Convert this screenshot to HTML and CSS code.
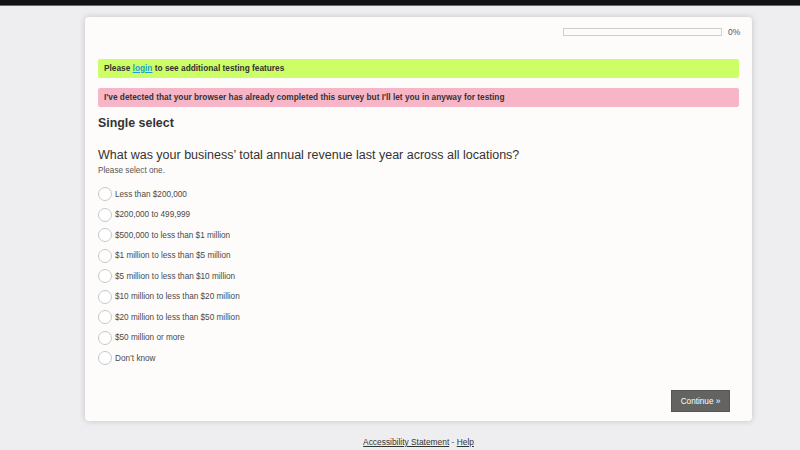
FILE: index.html
```html
<!DOCTYPE html>
<html>
<head>
<meta charset="utf-8">
<link rel="stylesheet" href="styles.css">
</head>
<body>
<div class="topbar"></div>
<div class="page">
  <div class="card">
    <div class="progress-row">
      <div class="progress"><div class="progress-fill"></div></div>
      <span class="pct">0%</span>
    </div>
    <div class="notice green">Please <a href="#">login</a> to see additional testing features</div>
    <div class="notice pink">I've detected that your browser has already completed this survey but I'll let you in anyway for testing</div>
    <h2 class="section">Single select</h2>
    <h1 class="question">What was your business’ total annual revenue last year across all locations?</h1>
    <p class="hint">Please select one.</p>
    <ul class="options">
      <li><span class="radio"></span>Less than $200,000</li>
      <li><span class="radio"></span>$200,000 to 499,999</li>
      <li><span class="radio"></span>$500,000 to less than $1 million</li>
      <li><span class="radio"></span>$1 million to less than $5 million</li>
      <li><span class="radio"></span>$5 million to less than $10 million</li>
      <li><span class="radio"></span>$10 million to less than $20 million</li>
      <li><span class="radio"></span>$20 million to less than $50 million</li>
      <li><span class="radio"></span>$50 million or more</li>
      <li><span class="radio"></span>Don’t know</li>
    </ul>
    <div class="actions"><button class="continue">Continue »</button></div>
  </div>
  <div class="footer"><a href="#">Accessibility Statement</a> - <a href="#">Help</a></div>
</div>
</body>
</html>
```
FILE: styles.css
```css
html, body { margin: 0; padding: 0; }
body {
  background: #eeedf0;
  font-family: "Liberation Sans", Arial, sans-serif;
  color: #333;
  width: 800px;
  height: 450px;
  overflow: hidden;
}
.topbar { height: 5px; background: #141216; border-bottom: 1px solid #6a6a6a; }
.page {
  padding: 11px 0 0 85px;
  width: 667px;
  display: flex;
  flex-direction: column;
  align-items: center;
}
.card {
  box-sizing: border-box;
  width: 667px;
  height: 404px;
  background: #fdfcfa;
  border-radius: 4px;
  box-shadow: 0 0 6px rgba(0,0,0,0.18);
  padding: 10px 13px 9px;
  display: flex;
  flex-direction: column;
}
.progress-row { display: flex; justify-content: flex-end; align-items: center; gap: 6px; height: 9px; margin-right: -1px; }
.progress { width: 157px; height: 6px; border: 1px solid #cfcfcf; background: #fbfbfb; }
.pct { font-size: 8.5px; color: #555; width: 12px; }
.notice {
  font-size: 8.3px;
  font-weight: bold;
  color: #333;
  padding: 0 6px;
  height: 19px;
  line-height: 19px;
  border-radius: 2px;
}
.notice a { color: #1a9fd9; }
.green { background: #ccfe66; margin-top: 23px; }
.pink { background: #f7b6c7; margin-top: 10px; }
.section { font-size: 12.4px; font-weight: bold; margin: 9px 0 0; color: #333; line-height: 15px; }
.question { font-size: 12.5px; font-weight: normal; margin: 16px 0 0; color: #333; line-height: 16px; }
.hint { font-size: 8.2px; margin: 3px 0 0; color: #555; }
.options { list-style: none; margin: 9px 0 0; padding: 0; }
.options li { display: flex; align-items: center; height: 20.5px; font-size: 8.2px; color: #4a4a4a; }
.radio { width: 12px; height: 12px; border: 1px solid #c8c8c8; border-radius: 50%; background: #fff; margin-right: 3px; }
.actions { margin-top: auto; display: flex; justify-content: flex-end; margin-right: 9px; }
.continue {
  background: #636462;
  color: #fff;
  border: 1px solid #555;
  font-family: inherit;
  font-size: 8.2px;
  width: 59px;
  height: 22px;
  padding: 0;
}
.footer { font-size: 8.4px; margin-top: 16px; color: #555; }
.footer a { color: #333; }
```
